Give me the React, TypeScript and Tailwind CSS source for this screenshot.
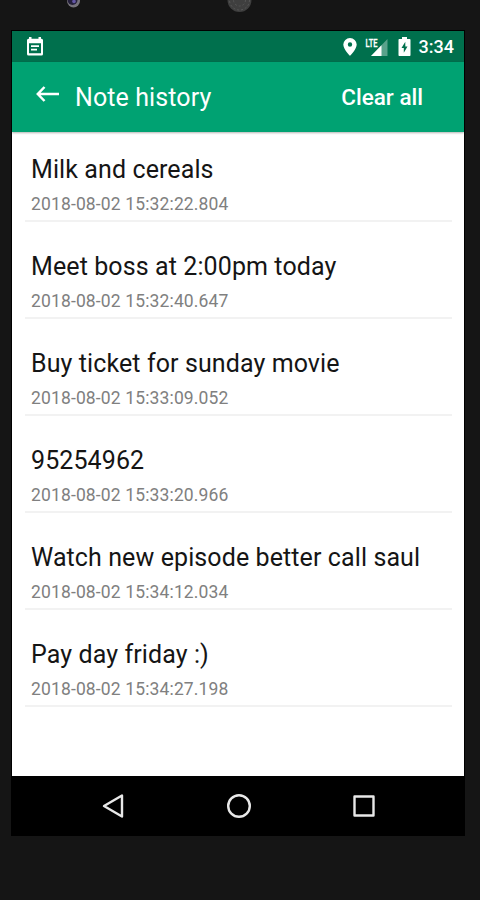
import React from 'react';

interface Note {
  text: string;
  date: string;
}

const notes: Note[] = [
  { text: 'Milk and cereals', date: '2018-08-02 15:32:22.804' },
  { text: 'Meet boss at 2:00pm today', date: '2018-08-02 15:32:40.647' },
  { text: 'Buy ticket for sunday movie', date: '2018-08-02 15:33:09.052' },
  { text: '95254962', date: '2018-08-02 15:33:20.966' },
  { text: 'Watch new episode better call saul', date: '2018-08-02 15:34:12.034' },
  { text: 'Pay day friday :)', date: '2018-08-02 15:34:27.198' },
];

function StatusBar() {
  return (
    <div className="flex h-[31px] shrink-0 items-center bg-[#00704d] pl-[14px] pr-[10px] text-white">
      <svg width="18" height="19" viewBox="0 0 18 19">
        <path
          fill="currentColor"
          fillRule="evenodd"
          d="M3 0h2.500v1.800h7V0H15v1.800h.5A1.500 1.500 0 0 1 17 3.300V17a1.500 1.500 0 0 1-1.500 1.500h-13A1.500 1.500 0 0 1 1 17V3.300a1.500 1.500 0 0 1 1.500-1.500H3zM3 6.300v9.900h12V6.300z"
        />
        <path fill="currentColor" d="M5 8.200h8V10H5zM5 11.800h6v1.800H5z" />
      </svg>

      <div className="ml-auto flex items-center">
        <svg width="14" height="18" viewBox="0 0 14 18">
          <path
            fill="currentColor"
            fillRule="evenodd"
            d="M7 0a6.700 6.700 0 0 0-6.700 6.600C.3 11.300 7 18 7 18s6.700-6.700 6.700-11.400A6.700 6.700 0 0 0 7 0zm0 4.300a2.200 2.200 0 1 1 0 4.400 2.200 2.200 0 0 1 0-4.400z"
          />
        </svg>
        <svg className="ml-[8px]" width="24" height="20" viewBox="0 0 24 20">
          <path fill="currentColor" fillOpacity="0.35" d="M22.500 2v17H6z" />
          <path fill="currentColor" d="M16.500 8.200V19H6z" />
          <path className="text-[#00704d]" fill="currentColor" d="M0 0h13v10.500H0z" />
          <text
            x="0.500"
            y="9.500"
            fill="currentColor"
            stroke="currentColor"
            strokeWidth="0.300"
            fontFamily="Roboto, sans-serif"
            fontSize="11.500"
            fontWeight="500"
            textLength="12"
            lengthAdjust="spacingAndGlyphs"
          >
            LTE
          </text>
        </svg>
        <svg className="ml-[9px]" width="13" height="19" viewBox="0 0 13 19">
          <path
            fill="currentColor"
            fillRule="evenodd"
            d="M4 0h5v2h2.500c.6 0 1 .4 1 1v15c0 .6-.4 1-1 1h-10c-.6 0-1-.4-1-1V3c0-.6.4-1 1-1H4zM7.300 4.800L3.500 11h2.300v4.800L9.500 9.500H7.300z"
          />
        </svg>
        <span className="ml-[8px] text-[18px] font-medium leading-none">3:34</span>
      </div>
    </div>
  );
}

function AppBar() {
  return (
    <div className="z-10 flex h-[70px] shrink-0 items-center bg-[#00a272] pl-[24px] pr-[41px] text-white shadow-[0_1px_2px_rgba(0,0,0,0.3)]">
      <svg className="-mt-[6px]" width="23" height="16" viewBox="0 0 23 16" fill="none" stroke="currentColor" strokeWidth="2.500">
        <path d="M8.500 1L1.800 8l6.700 7M1.800 8H23" />
      </svg>
      <h1 className="ml-[16px] text-[25px] leading-none tracking-[0.1px]">Note history</h1>
      <button className="ml-auto text-[22.500px] font-medium leading-none">Clear all</button>
    </div>
  );
}

function NoteRow({ note }: { note: Note }) {
  return (
    <li className="flex h-[97px] flex-col justify-end border-b-2 border-[#f2f2f2] pl-[6px] first:h-[90px]">
      <p className="whitespace-nowrap text-[25px] leading-[30px] tracking-[0.1px] text-[#151515]">{note.text}</p>
      <p className="mb-[6px] mt-[9px] whitespace-nowrap text-[17.500px] leading-[20px] tracking-[0.140px] text-[#808080]">
        {note.date}
      </p>
    </li>
  );
}

function NavBar() {
  return (
    <div className="flex h-[59px] shrink-0 items-center justify-between bg-black pl-[89px] pr-[88px] text-[#e8e8e8]">
      <svg width="24" height="26" viewBox="0 0 24 26" fill="none" stroke="currentColor" strokeWidth="2.400" strokeLinejoin="round">
        <path d="M21 2.500v21L3 13z" />
      </svg>
      <svg width="26" height="26" viewBox="0 0 26 26" fill="none" stroke="currentColor" strokeWidth="2.400">
        <circle cx="13" cy="13" r="10.800" />
      </svg>
      <svg width="24" height="24" viewBox="0 0 24 24" fill="none" stroke="currentColor" strokeWidth="2.400" strokeLinejoin="round">
        <rect x="2.500" y="2.500" width="19" height="19" />
      </svg>
    </div>
  );
}

export default function App() {
  return (
    <div className="flex h-[900px] w-[480px] flex-col overflow-hidden bg-[#151515] font-['Roboto',sans-serif]">
      {/* Camera and speaker */}
      <div className="flex h-[31px] shrink-0 items-start pl-[67px]">
        <svg width="340" height="12" viewBox="0 0 340 12">
          <circle cx="6.500" cy="1" r="6.500" fill="#77747b" />
          <circle cx="5.500" cy="0" r="5" fill="#25203b" />
          <circle cx="7" cy="1.500" r="1.800" fill="#6457a5" />
          <circle cx="172.500" cy="0" r="12" fill="#3f3f3f" />
          <circle cx="172.500" cy="0" r="10" fill="none" stroke="#575757" strokeDasharray="2 2" />
          <circle cx="172.500" cy="0" r="6" fill="none" stroke="#575757" strokeDasharray="2 2" />
        </svg>
      </div>

      <div className="ml-[12px] flex h-[804px] w-[452px] flex-col bg-white shadow-[0_0_0_1px_#000]">
        <StatusBar />
        <AppBar />
        <ul className="flex-1 pl-[13px] pr-[12px]">
          {notes.map((note) => (
            <NoteRow key={note.date} note={note} />
          ))}
        </ul>
        <NavBar />
      </div>
    </div>
  );
}
